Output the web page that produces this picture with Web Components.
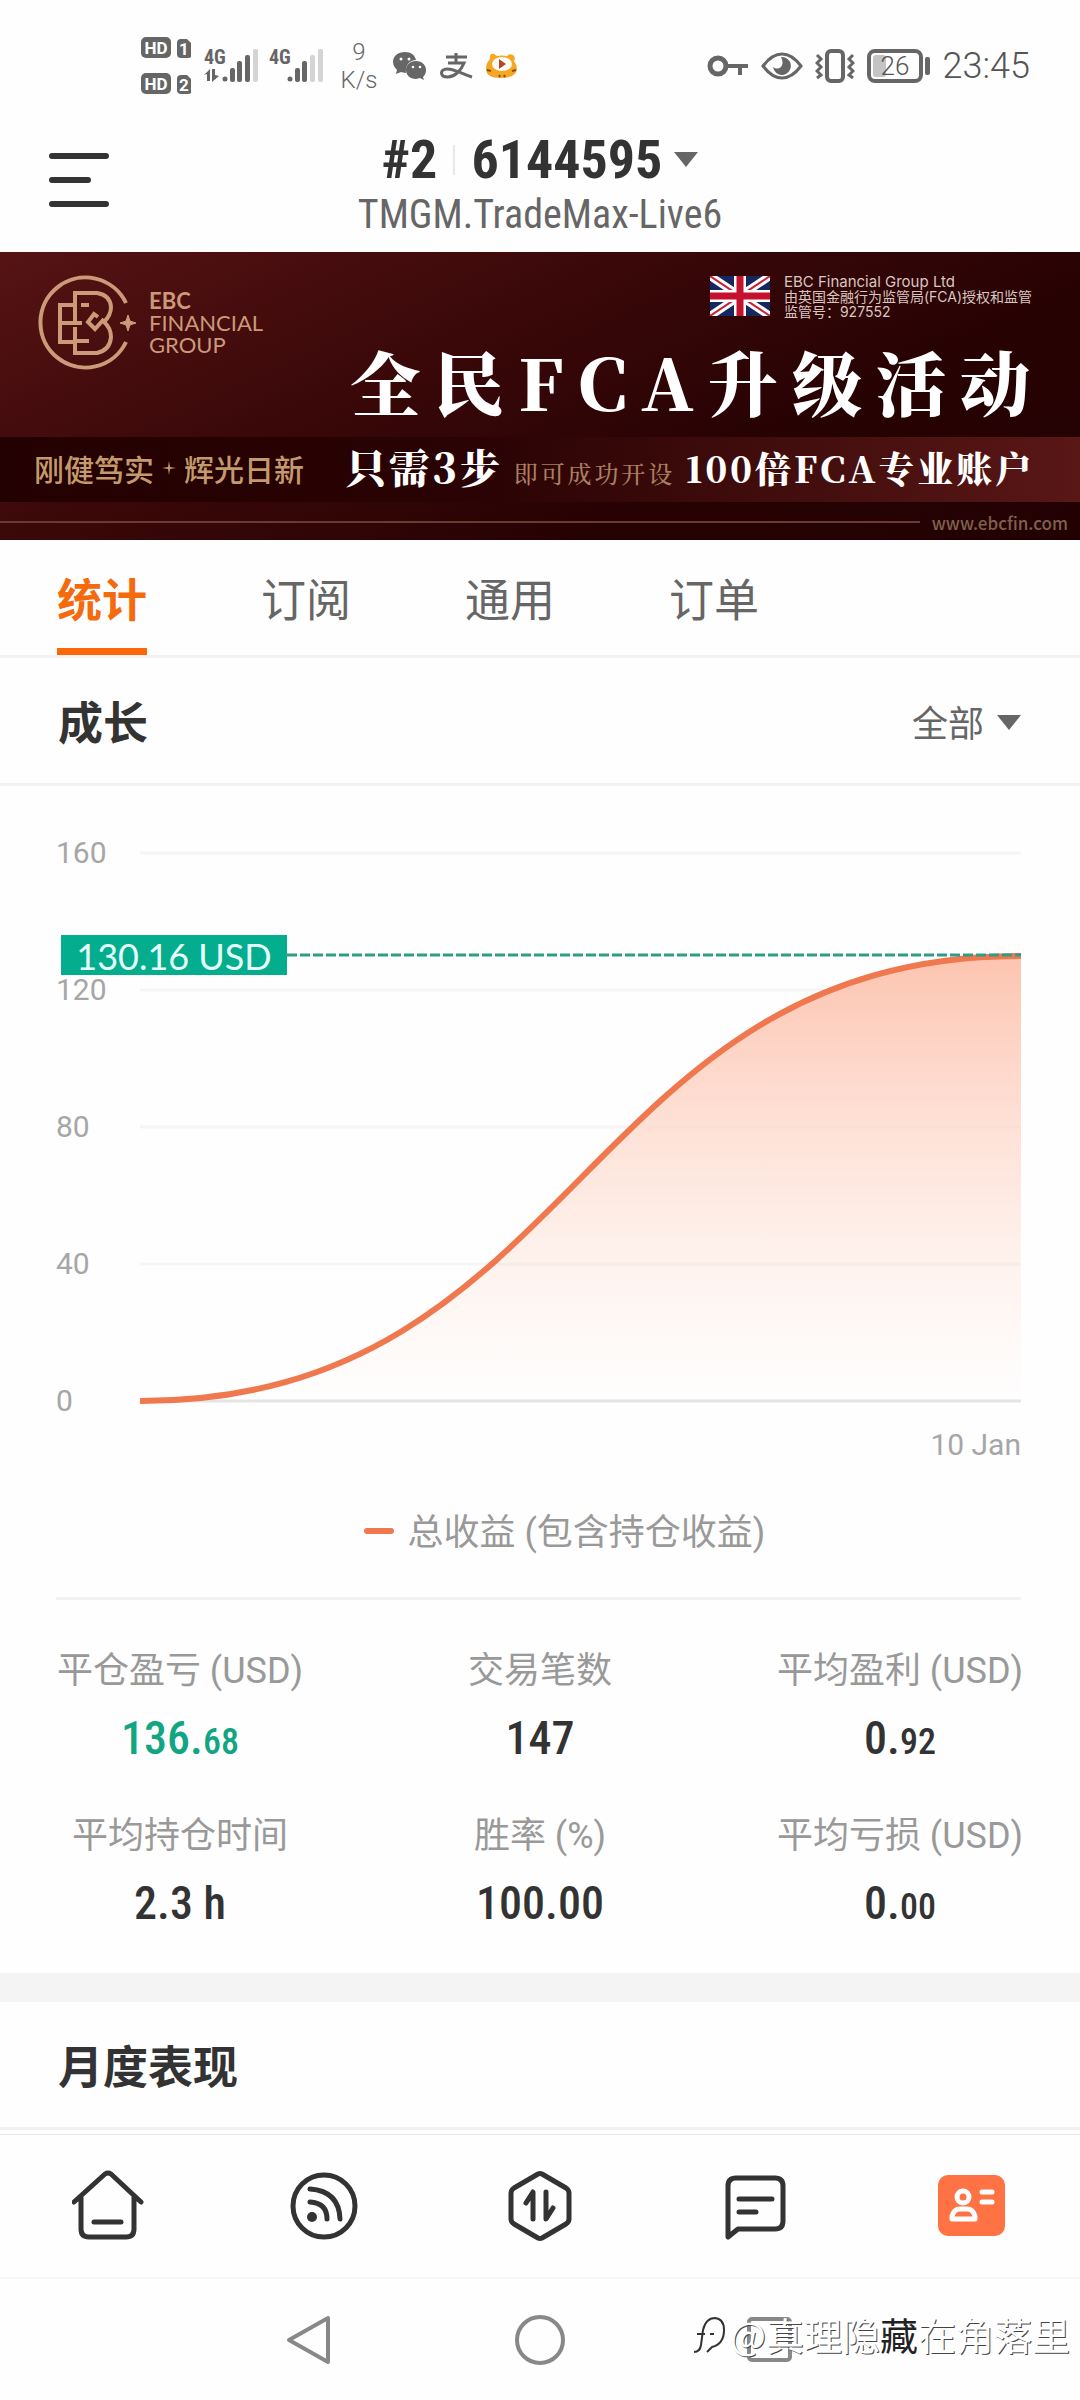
<!DOCTYPE html>
<html lang="zh-CN">
<head>
<meta charset="utf-8">
<meta name="viewport" content="width=device-width, initial-scale=1">
<title>TMGM.TradeMax-Live6</title>
<style>
  :root {
    --ink: #333;
    --mid: #666;
    --soft: #999;
    --line: #f2f2f2;
    --orange: #f56a0c;
    --green: #12a583;
    --ui: Roboto, "Noto Sans CJK SC", sans-serif;
    --din: "Roboto Condensed", "Liberation Sans Narrow", Roboto, "Noto Sans CJK SC", sans-serif;
    --song: "Noto Serif CJK SC", "Liberation Serif", "Noto Sans CJK SC", serif;
  }
  body { margin: 0; background: #fefefe; color: var(--ink); font-family: var(--ui); }
</style>
</head>
<body>
<account-page></account-page>

<script>
const define = (name, html, setup) => customElements.define(name, class extends HTMLElement {
  constructor() {
    super();
    this.attachShadow({ mode: "open" });
    const t = document.createElement("template");
    t.innerHTML = `<style>*{box-sizing:border-box}button,select{font:inherit;color:inherit;background:none;border:0;padding:0;margin:0}a{color:inherit;text-decoration:none}</style>` + html;
    this.shadowRoot.append(t.content.cloneNode(true));
    if (setup) setup.call(this, this.shadowRoot);
  }
});

define("status-bar", `
<style>
  :host { display: flex; justify-content: space-between; align-items: center; height: 130px; box-sizing: border-box; padding: 1px 50px 0 141px; color: #666; }
  .side { display: flex; align-items: center; }
  .side svg { display: block; flex: none; }
  .rate { display: flex; flex-direction: column; align-items: center; font-size: 24px; line-height: 28px; font-weight: 300; width: 40px; margin: 0 14px 0 15px; }
  .sig { margin-left: 13px; }
  .sig + .sig { margin-left: 10px; }
  .apps { display: flex; gap: 12px; }
  .right { gap: 12px; }
  .time { font-size: 36px; line-height: 40px; font-weight: 300; color: #555; }
</style>
<div class="side">
  <svg width="50" height="58" viewBox="0 0 50 58" fill="#666" font-family="Roboto, sans-serif" font-weight="700">
    <rect width="30" height="21" rx="5"/><path d="M36 6q0-4 4-4h6l5 5v10q0 4-4 4h-7q-4 0-4-4z"/>
    <rect y="36" width="30" height="21" rx="5"/><path d="M36 42q0-4 4-4h6l5 5v10q0 4-4 4h-7q-4 0-4-4z"/>
    <g fill="#fff" font-size="17" text-anchor="middle"><text x="15" y="17">HD</text><text x="43" y="18">1</text><text x="15" y="53">HD</text><text x="43" y="54">2</text></g>
  </svg>
  <svg class="sig" width="55" height="44" viewBox="0 -4 55 44" fill="#666">
    <text x="0" y="16" font-family="Roboto Condensed, Roboto, sans-serif" font-weight="700" font-size="20">4G</text>
    <path d="M0 27l6-6v12H3v-7zM8 21h3v6l4 1-7 6z"/>
    <circle cx="21" cy="31" r="2.500"/><rect x="26" y="20" width="5" height="14" rx="2"/><rect x="33" y="13" width="5" height="21" rx="2"/><rect x="41" y="7" width="5" height="27" rx="2"/><rect x="49" y="1" width="5" height="33" rx="2" fill="#d4d4d4"/>
  </svg>
  <svg class="sig" width="55" height="44" viewBox="0 -4 55 44" fill="#666">
    <text x="0" y="16" font-family="Roboto Condensed, Roboto, sans-serif" font-weight="700" font-size="20">4G</text>
    <circle cx="21" cy="31" r="2.500"/><rect x="26" y="20" width="5" height="14" rx="2"/><rect x="33" y="13" width="5" height="21" rx="2"/><rect x="41" y="7" width="5" height="27" rx="2" fill="#d4d4d4"/><rect x="49" y="1" width="5" height="33" rx="2" fill="#d4d4d4"/>
  </svg>
  <div class="rate"><span>9</span><span>K/s</span></div>
  <div class="apps">
    <svg width="34" height="30" viewBox="0 0 34 30"><path fill="#666" d="M12 1C5 1 0 5 0 11c0 3 2 6 4 8l-1 4 5-2c1 0 3 1 5 1C12 14 17 9 23 9 22 4 18 1 12 1z"/><path fill="#666" d="M23 10c-6 0-10 4-10 9s4 9 10 9l4-1 4 2-1-3c2-2 3-4 3-7 0-5-4-9-10-9z"/><g fill="#fff"><circle cx="8" cy="8" r="1.500"/><circle cx="16" cy="8" r="1.500"/><circle cx="20" cy="16" r="1.300"/><circle cx="27" cy="16" r="1.300"/></g></svg>
    <svg width="34" height="30" viewBox="0 0 34 30" fill="none" stroke="#666" stroke-width="3"><path d="M7 6h21M17 2v10M9 12h16c-3 8-10 14-16 14-9 0-8-8-1-8 8 0 15 5 25 8"/></svg>
    <svg width="34" height="30" viewBox="0 0 34 30"><path fill="#f5a623" d="M5 8q-1-6 4-5l3 2q5-1 10 0 3-3 6-1 3 2 1 6 3 4 3 8-1 9-16 9T1 18q0-6 4-10z"/><ellipse cx="17" cy="13" rx="10" ry="7" fill="#fffdf5"/><path fill="#b5452b" d="M14 8l7 5-7 5z"/><path d="M2 19l4 1M31 19l-4 1M14 26l1-2M20 26l-1-2" stroke="#8a4a10" stroke-width="2"/></svg>
  </div>
</div>
<div class="side right">
  <svg width="42" height="22" viewBox="0 0 42 22" fill="none" stroke="#666"><circle cx="11" cy="11" r="8" stroke-width="5"/><path d="M19 11h22M33 11v9" stroke-width="4"/></svg>
  <svg width="42" height="30" viewBox="0 0 42 30"><path d="M2 15Q11 3 21 3t19 12Q31 27 21 27T2 15z" fill="none" stroke="#666" stroke-width="3"/><path fill="#666" d="M20 6a9 9 0 1 1-8 10q4 3 8 0 3-4 0-10z"/></svg>
  <svg width="40" height="34" viewBox="0 0 40 34" fill="none" stroke="#666"><rect x="12" y="2" width="16" height="30" rx="4" stroke-width="4"/><path d="M2 6l4 4-4 4 4 4-4 4 4 4-4 3M38 6l-4 4 4 4-4 4 4 4-4 4 4 3" stroke-width="3"/></svg>
  <svg width="64" height="34" viewBox="0 0 64 34"><rect x="2" y="2" width="52" height="30" rx="6" fill="none" stroke="#666" stroke-width="4"/><rect x="6" y="6" width="13" height="22" rx="3" fill="#c4c4c4"/><rect x="58" y="8" width="5" height="18" rx="2" fill="#666"/><text x="28" y="26" font-family="Roboto, sans-serif" font-size="26" font-weight="300" text-anchor="middle" fill="#555">26</text></svg>
  <span class="time">23:45</span>
</div>`);

define("account-header", `
<style>
  :host { display: grid; grid-template-columns: 60px 1fr 60px; padding: 0 49px; height: 122px; }
  .menu { height: 54px; margin-top: 23px; }
  .menu svg { display: block; }
  .mid { display: flex; flex-direction: column; align-items: center; padding-top: 2px; }
  .acct { display: flex; align-items: center; height: 56px; font: 700 54px/56px var(--din); }
  .acct i { width: 2px; height: 30px; background: #e8e8e8; margin: 0 16px; }
  .acct svg { margin-left: 12px; }
  .srv { font: 400 40px/44px var(--din); color: var(--mid); margin-top: 5px; }
</style>
<button class="menu" aria-label="菜单"><svg width="60" height="54" viewBox="0 0 60 54" stroke="#333" stroke-width="6" stroke-linecap="round"><path d="M3 3h54M3 27h36M3 51h54"/></svg></button>
<div class="mid">
  <button class="acct"><span>#2</span><i></i><span>6144595</span><svg width="24" height="16" viewBox="0 0 24 16"><path d="M0 0h24L12 15z" fill="#666"/></svg></button>
  <div class="srv">TMGM.TradeMax-Live6</div>
</div>`);

define("ebc-logo", `
<style>
  :host { display: flex; align-items: center; gap: 11px; color: #cb9a78; }
  svg { display: block; }
  div { font: 400 22px/22px Lato, sans-serif; }
  b { display: block; font-weight: 700; }
  span { display: block; }
</style>
<svg width="100" height="98" viewBox="0 0 100 98" fill="none" stroke="#cb9a78" stroke-width="4">
  <path d="M88 29A45 45 0 1 0 88 68"/>
  <path d="M37 48V19h22q13 2 14 14 0 8-7 15 7 6 7 15-1 13-14 16H37V53M37 31H22v37h13M22 49h22M43 31h8M38 67h13"/>
  <path d="M60 43l-4-3-6 8 7 7 9-10"/>
  <path d="M90 41l2 6 6 2-6 2-2 6-2-6-6-2 6-2z" fill="#cb9a78" stroke-width="1"/>
</svg>
<div><b>EBC</b><span>FINANCIAL</span><span>GROUP</span></div>`);

define("promo-banner", `
<style>
  :host { display: block; }
  a { display: block; color: #fff; background: linear-gradient(155deg, #561314 0%, #3a0809 38%, #270203 70%, #220102 100%); }
  .head { display: flex; justify-content: space-between; height: 185px; padding: 22px 36px 0 38px; }
  .right { display: flex; flex-direction: column; align-items: flex-end; }
  .fca { display: flex; align-items: center; gap: 14px; margin-right: 12px; font: 14px/15px Inter, "Noto Sans CJK SC", sans-serif; color: #d9c6c0; }
  .fca span { display: block; }
  .fca .en { font-size: 15px; }
  .fca svg { margin-bottom: 2px; }
  h2 { margin: 20px 0 0; font: 900 70px/84px var(--song); letter-spacing: .2em; white-space: nowrap; }
  .band { display: flex; align-items: center; height: 65px; padding: 0 46px 0 34px; background: linear-gradient(90deg, #230001, #2b0304 45%, #591716); white-space: nowrap; }
  .motto { display: flex; align-items: center; gap: 8px; padding-bottom: 4px; font: 500 30px/40px "Noto Sans CJK SC", sans-serif; color: #c39a6c; }
  .steps { flex: 1; display: flex; align-items: baseline; justify-content: space-between; margin-left: 42px; font-family: var(--song); font-weight: 900; line-height: 56px; }
  .a { font-size: 40px; letter-spacing: .08em; }
  .b { font-size: 24px; font-weight: 500; letter-spacing: .12em; color: #a87f60; }
  .c { font-size: 36px; letter-spacing: .08em; }
  .foot { display: flex; align-items: center; gap: 12px; height: 38px; padding-right: 12px; padding-top: 12px; font: 500 17px/20px "Noto Sans CJK SC", sans-serif; color: #80604c; }
  .foot i { flex: 1; height: 2px; background: #6b3a33; margin-bottom: 10px; }
  .foot span { margin-bottom: 8px; }
  ebc-logo { align-self: flex-start; }
</style>
<a href="#ebc">
  <div class="head">
    <ebc-logo></ebc-logo>
    <div class="right">
      <div class="fca">
        <svg width="60" height="40" viewBox="0 0 60 40"><defs><clipPath id="f"><path d="M0 0h60v40H0z"/></clipPath></defs><g clip-path="url(#f)"><path fill="#14295e" d="M0 0h60v40H0z"/><path d="M0 0l60 40M60 0L0 40" stroke="#fff" stroke-width="8"/><path d="M0 0l60 40M60 0L0 40" stroke="#c8203a" stroke-width="2"/><path d="M30 0v40M0 20h60" stroke="#fff" stroke-width="12"/><path d="M30 0v40M0 20h60" stroke="#c5102e" stroke-width="7"/></g></svg>
        <div><span class="en">EBC Financial Group Ltd</span><span>由英国金融行为监管局(FCA)授权和监管</span><span>监管号：927552</span></div>
      </div>
      <h2>全民FCA升级活动</h2>
    </div>
  </div>
  <div class="band">
    <div class="motto"><span>刚健笃实</span><svg width="14" height="14" viewBox="0 0 14 14"><path d="M7 0l1 6 6 1-6 1-1 6-1-6-6-1 6-1z" fill="#c39a6c"/></svg><span>辉光日新</span></div>
    <div class="steps"><span class="a">只需3步</span><span class="b">即可成功开设</span><span class="c">100倍FCA专业账户</span></div>
  </div>
  <div class="foot"><i></i><span>www.ebcfin.com</span></div>
</a>`);

define("tab-bar", `
<style>
  :host { display: block; border-bottom: 3px solid var(--line); }
  nav { display: flex; gap: 114px; padding: 0 57px; }
  button { font: 400 45px/64px var(--ui); color: var(--mid); border-bottom: 7px solid transparent; padding: 30px 0 14px; }
  button[aria-selected="true"] { font-weight: 700; color: var(--orange); border-bottom-color: #fa660a; }
</style>
<nav role="tablist">
  <button role="tab" aria-selected="true">统计</button>
  <button role="tab" aria-selected="false">订阅</button>
  <button role="tab" aria-selected="false">通用</button>
  <button role="tab" aria-selected="false">订单</button>
</nav>`);

define("section-head", `
<style>
  :host { display: flex; justify-content: space-between; align-items: center; height: 128px; box-sizing: border-box; padding: 8px 59px 0 58px; border-bottom: 3px solid var(--line); }
  h3 { margin: 0; font: 700 45px/64px var(--ui); }
</style>
<h3><slot></slot></h3><slot name="end"></slot>`);

define("range-select", `
<style>
  :host { display: block; }
  label { display: flex; align-items: center; gap: 12px; color: var(--mid); font-size: 36px; line-height: 48px; }
  select { appearance: none; }
  svg { margin-bottom: 4px; }
</style>
<label><select aria-label="范围"><option>全部</option></select><svg width="24" height="16" viewBox="0 0 24 16"><path d="M0 0h24L12 15z" fill="#666"/></svg></label>`);

define("growth-chart", `
<style>
  :host { display: block; padding: 49px 59px 0 56px; color: #a6a6a6; font-size: 30px; line-height: 36px; }
  .chart { display: grid; grid-template-columns: 84px 1fr; }
  .axis { display: flex; flex-direction: column; justify-content: space-between; height: 584px; }
  .plot { position: relative; height: 548px; margin: 18px 0; }
  .plot svg { display: block; width: 100%; height: 100%; overflow: visible; }
  .badge { position: absolute; left: -79px; top: 82px; width: 226px; height: 40px; background: #03ad8d; color: #e6fffa; font: 400 36px/42px Lato, sans-serif; text-align: center; }
  .x { text-align: right; margin-top: 8px; }
  .legend { display: flex; align-items: center; justify-content: center; gap: 14px; margin: 46px 0 40px; padding-left: 52px; font-size: 36px; line-height: 48px; color: var(--soft); }
  .legend i { width: 30px; height: 6px; border-radius: 3px; background: #f0784e; margin-bottom: 4px; }
  hr { border: 0; height: 3px; background: var(--line); margin: 0; }
</style>
<div class="chart">
  <div class="axis"><span>160</span><span>120</span><span>80</span><span>40</span><span>0</span></div>
  <div class="plot">
    <svg viewBox="0 0 881 548" preserveAspectRatio="none">
      <defs><linearGradient id="g" x1="0" y1="0" x2="0" y2="1"><stop offset="0" stop-color="#fdc4b0"/><stop offset="1" stop-color="#fee0d4" stop-opacity="0"/></linearGradient></defs>
      <path d="M0 0h881M0 137h881M0 274h881M0 411h881" stroke="#f5f5f5" stroke-width="3"/>
      <path d="M0 548h881" stroke="#e4e4e4" stroke-width="3"/>
      <path d="M0 548C440 548 441 103 881 103V548z" fill="url(#g)"/>
      <path d="M0 548C440 548 441 103 881 103" fill="none" stroke="#f0784e" stroke-width="6"/>
      <path d="M147 102H881" stroke="#2d9d86" stroke-width="3" stroke-dasharray="10 3"/>
    </svg>
    <div class="badge">130.16 USD</div>
  </div>
</div>
<div class="x">10 Jan</div>
<div class="legend"><i></i><span>总收益 (包含持仓收益)</span></div>
<hr>`);

define("stat-item", `
<style>
  :host { display: flex; flex-direction: column; align-items: center; gap: 19px; }
  .l { font-size: 36px; line-height: 48px; color: var(--soft); white-space: nowrap; }
  .v { font: 500 46px/48px var(--din); height: 48px; white-space: nowrap; }
</style>
<div class="l"></div><div class="v"><slot></slot></div>`, function (root) {
  root.querySelector(".l").textContent = this.getAttribute("label");
});

define("stat-grid", `
<style>
  :host { display: grid; grid-template-columns: repeat(3, 1fr); row-gap: 50px; padding: 47px 0 46px; }
</style><slot></slot>`);

define("app-nav", `
<style>
  :host { display: block; margin-top: 4px; border-top: 1px solid #eaeaea; }
  nav { display: grid; grid-template-columns: repeat(5, 1fr); height: 142px; }
  a { display: grid; place-items: center; }
  svg { fill: none; stroke: #333; stroke-width: 5; stroke-linecap: round; stroke-linejoin: round; }
</style>
<nav>
  <a href="#home" aria-label="首页"><svg width="72" height="72" viewBox="0 0 72 72"><path d="M2 32L33 4q3-2 6 0l30 28M9 27v32q0 8 8 8h37q8 0 8-8V27M22 52h27"/></svg></a>
  <a href="#feed" aria-label="动态"><svg width="72" height="72" viewBox="0 0 72 72"><circle cx="36" cy="36" r="31"/><path d="M22 32q17 1 17 17M22 19q29 2 30 30"/><circle cx="24" cy="47" r="5" fill="#333" stroke="none"/></svg></a>
  <a href="#trade" aria-label="交易"><svg width="72" height="72" viewBox="0 0 72 72"><path d="M34 4q2-1 4 0l24 14q3 2 3 5v26q0 3-3 5L38 68q-2 1-4 0L10 54q-3-2-3-5V23q0-3 3-5zM22 33l7-11v27M42 22v27l7-11"/></svg></a>
  <a href="#chat" aria-label="消息"><svg width="72" height="72" viewBox="0 0 72 72"><path d="M8 67V16q0-8 8-8h39q8 0 8 8v35q0 8-8 8H18zM19 29h33M19 42h17"/></svg></a>
  <a href="#me" aria-label="账户"><svg width="72" height="72" viewBox="0 0 72 72"><rect x="2" y="5" width="67" height="61" rx="10" fill="#ff7243" stroke="none"/><g stroke="#fff"><circle cx="27" cy="27" r="6"/><path d="M16 49h23v-3q-2-7-8-7h-7q-6 0-8 7zM46 22h10M46 32h10"/></g></svg></a>
</nav>`);

define("system-nav", `
<style>
  :host { display: flex; justify-content: center; align-items: center; gap: 180px; height: 123px; box-sizing: border-box; border-top: 2px solid #f8f8f8; position: relative; }
  button { display: block; width: 50px; height: 50px; }
  svg { display: block; fill: none; stroke: #888; stroke-width: 4; stroke-linejoin: round; }
  .mark { position: absolute; right: 10px; top: 31px; display: flex; align-items: center; gap: 4px; font: 400 38px/48px "Noto Sans CJK SC", sans-serif; color: #fff; text-shadow: 1px 1px 0 #444; }
  .mark b { font-weight: 400; color: #222; text-shadow: none; }
</style>
<button aria-label="返回"><svg width="50" height="50" viewBox="0 0 50 50"><path d="M4 25L43 3v44z"/></svg></button>
<button aria-label="主屏幕"><svg width="50" height="50" viewBox="0 0 50 50"><circle cx="25" cy="25" r="23"/></svg></button>
<button aria-label="最近任务"><svg width="50" height="50" viewBox="0 0 50 50"><rect x="4" y="4" width="41" height="41" rx="3"/></svg></button>
<div class="mark"><svg width="34" height="48" viewBox="0 0 34 48"><path style="stroke:#333;stroke-width:2" d="M2 42q6 0 7-7l2-15q3-12 12-12 9 1 9 12 0 14-12 17l-5 5M5 24h8M18 24h4"/></svg><span>@真理隐<b>藏</b>在角落里</span></div>`);

define("account-page", `
<style>
  :host { display: block; }
  .gap { height: 29px; background: #f4f4f4; }
  .up { color: var(--green); }
  small { font-size: 36px; line-height: 36px; }
</style>
<status-bar></status-bar>
<account-header></account-header>
<promo-banner></promo-banner>
<tab-bar></tab-bar>
<section-head>成长<range-select slot="end"></range-select></section-head>
<growth-chart></growth-chart>
<stat-grid>
  <stat-item label="平仓盈亏 (USD)"><span class="up">136.<small>68</small></span></stat-item>
  <stat-item label="交易笔数">147</stat-item>
  <stat-item label="平均盈利 (USD)">0.<small>92</small></stat-item>
  <stat-item label="平均持仓时间">2.3 h</stat-item>
  <stat-item label="胜率 (%)">100.00</stat-item>
  <stat-item label="平均亏损 (USD)">0.<small>00</small></stat-item>
</stat-grid>
<div class="gap"></div>
<section-head>月度表现</section-head>
<app-nav></app-nav>
<system-nav></system-nav>`);
</script>
</body>
</html>
